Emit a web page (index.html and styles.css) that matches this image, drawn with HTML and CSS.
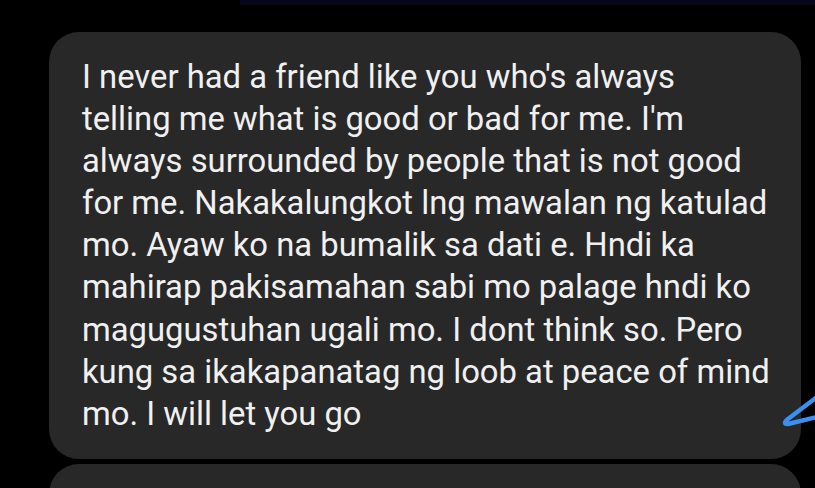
FILE: index.html
```html
<!DOCTYPE html>
<html>
<head>
<meta charset="utf-8">
<link rel="stylesheet" href="styles.css">
</head>
<body>
<div class="screen">
  <div class="topbar"></div>
  <div class="bubble">
    <p class="msg">I never had a friend like you who's always<br>telling me what is good or bad for me. I'm<br>always surrounded by people that is not good<br>for me. Nakakalungkot lng mawalan ng katulad<br>mo. Ayaw ko na bumalik sa dati e. Hndi ka<br>mahirap pakisamahan sabi mo palage hndi ko<br>magugustuhan ugali mo. I dont think so. Pero<br>kung sa ikakapanatag ng loob at peace of mind<br>mo. I will let you go</p>
  </div>
  <div class="bubble next"></div>
  <svg class="scribble" width="40" height="40" viewBox="0 0 40 40">
    <path d="M42 2 L9 27 Q3 32 9 32 L42 24" fill="none" stroke="#3a8ff0" stroke-width="4.5" stroke-linecap="round" stroke-linejoin="round"/>
  </svg>
</div>
</body>
</html>
```
FILE: styles.css
```css
html, body {
  margin: 0;
  padding: 0;
  background: #000;
}
.screen {
  position: relative;
  width: 815px;
  height: 488px;
  overflow: hidden;
  background: #000;
  display: flex;
  flex-direction: column;
}
.topbar {
  height: 5px;
  margin-left: 240px;
  background: #07051a;
  flex: none;
}
.bubble {
  flex: none;
  margin-top: 27px;
  margin-left: 49px;
  width: 752px;
  background: #282828;
  border-radius: 30px;
  box-sizing: border-box;
  padding: 24px 0 24px 33px;
}
.bubble.next {
  margin-top: 5px;
  height: 80px;
}
.msg {
  margin: 0;
  color: #f0f0f0;
  font-family: Roboto, "Noto Sans", sans-serif;
  font-size: 32.8px;
  line-height: 42.1px;
  white-space: nowrap;
}
.scribble {
  position: absolute;
  left: 779px;
  top: 392px;
}
```
